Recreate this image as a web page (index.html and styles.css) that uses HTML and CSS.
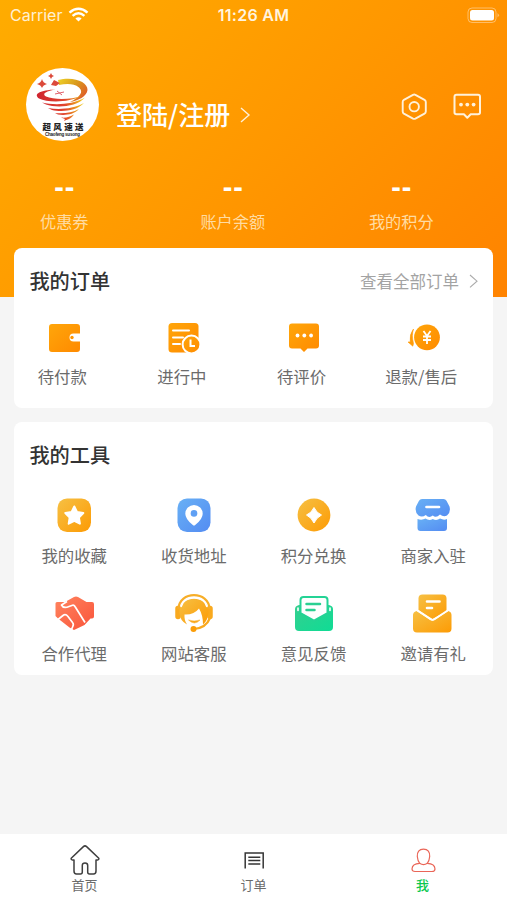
FILE: index.html
```html
<!DOCTYPE html>
<html lang="zh-CN">
<head>
<meta charset="utf-8">
<title>我的</title>
<link rel="stylesheet" href="styles.css">
</head>
<body>
<svg class="defs" width="0" height="0" aria-hidden="true">
  <defs>
    <linearGradient id="orange" x1="0" y1="0" x2="1" y2="1"><stop offset="0" stop-color="#ffa60a"/><stop offset="1" stop-color="#ff8a00"/></linearGradient>
    <linearGradient id="gold" x1="0" y1="0" x2="1" y2="1"><stop offset="0" stop-color="#f6c044"/><stop offset="1" stop-color="#fd9b04"/></linearGradient>
    <linearGradient id="blue" x1="0" y1="0" x2="1" y2="1"><stop offset="0" stop-color="#68b0f5"/><stop offset="1" stop-color="#548cf2"/></linearGradient>
    <linearGradient id="coral" x1="0" y1="0" x2="1" y2="1"><stop offset="0" stop-color="#ff855f"/><stop offset="1" stop-color="#f9533a"/></linearGradient>
    <linearGradient id="green" x1="0" y1="0" x2="1" y2="1"><stop offset="0" stop-color="#35cf8f"/><stop offset="1" stop-color="#0fdc95"/></linearGradient>
    <linearGradient id="swirl" gradientUnits="userSpaceOnUse" x1="11" y1="0" x2="61" y2="0"><stop offset="0" stop-color="#cf2430"/><stop offset=".55" stop-color="#e0432d"/><stop offset=".82" stop-color="#eda51c"/><stop offset="1" stop-color="#f3e51c"/></linearGradient>
    <linearGradient id="band" gradientUnits="userSpaceOnUse" x1="30" y1="12" x2="58" y2="34"><stop offset="0" stop-color="#f0d629"/><stop offset=".5" stop-color="#d99a1c"/><stop offset="1" stop-color="#e0532a"/></linearGradient>
  </defs>
</svg>
<div class="screen">
  <header class="header">
    <div class="status">
      <div class="carrier"><span>Carrier</span>
        <svg width="21" height="16" viewBox="0 0 21 16" fill="#fff"><path d="M10.500 14.500 7.400 11.400Q10.500 8.900 13.600 11.400Z"/><g fill="none" stroke="#fff" stroke-width="2.500"><path d="M4.600 8.900Q10.500 3.700 16.400 8.900"/><path d="M1.500 5.600Q10.500-2 19.500 5.600"/></g></svg>
      </div>
      <div class="time">11:26 AM</div>
      <div class="power"><svg width="33" height="17" viewBox="0 0 33 17"><rect x="1" y="1" width="28" height="14.500" rx="4" fill="none" stroke="#fff" stroke-opacity=".4"/><rect x="3" y="3" width="24" height="10.500" rx="2.500" fill="#fff"/><path d="M30.500 6v4.500q3-2.200 0-4.500Z" fill="#fff" fill-opacity=".4"/></svg></div>
    </div>
    <div class="profile">
      <div class="avatar">
        <svg width="73" height="73" viewBox="0 0 73 73">
          <path d="M32 12C48 8 62 14 61.500 22C61 28 52 33 44 34C54 29 58 24 53 19.500C48 15.500 41 15.500 33 17Z" fill="url(#band)"/>
          <path d="M30 21.500C14 22 7 26 13 30.500C22 35 44 34.500 55 28C46 31.500 28 32 20 28.500C15 25.500 21 23 30 21.500Z" fill="url(#swirl)"/>
          <path d="M16 34.500C28 37.500 46 37 59 29.500C50 39.500 30 40 20 36.500ZM22 40C33 42 47 41 58 35C50 43.500 35 44 26 42ZM29 45C37 46 46 45 53 41C48 47 38 47.500 32 46.500ZM35 49.500C40 50 44 49 48 46.500C45 51 41 51.500 38 53L39 51Z" fill="url(#swirl)"/>
          <path d="M29 26 38 24M31 23 36 27" fill="none" stroke="#e0606a" stroke-width="1"/>
          <path d="M16 11q1 4 5 5q-4 1-5 4q-1-3-5-4q4-1 5-5ZM25 5q.6 2.500 3 3q-2.400.5-3 3q-.6-2.500-3-3q2.400-.5 3-3ZM28 12l6 3-4 3-5-1Z" fill="#dc4a3a"/>
          <text class="brand" x="37" y="62" text-anchor="middle" textLength="41">超风速送</text>
          <text class="brand-latin" x="36.500" y="67.500" text-anchor="middle" textLength="35">Chaofeng susong</text>
        </svg>
      </div>
      <div class="login">登陆/注册</div>
      <svg class="login-arrow" width="12" height="18" viewBox="0 0 12 18" fill="none" stroke="#fff" stroke-opacity=".85" stroke-width="1.400"><path d="M2 2 10 9 2 16"/></svg>
      <div class="actions">
        <svg width="28" height="30" viewBox="0 0 28 30" fill="none" stroke="#fff1da" stroke-width="1.900" stroke-linejoin="round"><path d="M13 2.800Q14.200 2.200 15.400 2.800L24.500 7.800Q25.800 8.500 25.800 10V19.500Q25.800 20.900 24.500 21.600L15.400 26.600Q14.200 27.200 13 26.600L3.900 21.600Q2.700 20.900 2.700 19.500V10Q2.700 8.500 3.900 7.800Z"/><circle cx="14.200" cy="14.700" r="4.700"/></svg>
        <svg width="30" height="30" viewBox="0 0 30 30" fill="none" stroke="#fff1da" stroke-width="2" stroke-linejoin="round"><path d="M4.500 2.800H26Q28 2.800 28 4.800V20.500Q28 22.300 26 22.300H18.700L15.300 25.700 11.900 22.300H4.500Q2.500 22.300 2.500 20.500V4.800Q2.500 2.800 4.500 2.800Z"/><g fill="#fff1da" stroke="none"><circle cx="9" cy="12.600" r="1.900"/><circle cx="15.300" cy="12.600" r="1.900"/><circle cx="21.600" cy="12.600" r="1.900"/></g></svg>
      </div>
    </div>
    <div class="stats">
      <div class="stat"><b>--</b><span>优惠券</span></div>
      <div class="stat"><b>--</b><span>账户余额</span></div>
      <div class="stat"><b>--</b><span>我的积分</span></div>
    </div>
  </header>

  <main class="content">
    <section class="card orders">
      <div class="card-head">
        <h2>我的订单</h2>
        <div class="more">查看全部订单<svg width="10" height="16" viewBox="0 0 10 16" fill="none" stroke="#aaa" stroke-width="1.100"><path d="M1 2 8 8.200 1 14.400"/></svg></div>
      </div>
      <div class="grid">
        <div class="item">
          <svg class="icon" viewBox="0 0 44 44"><path d="M9 8H34Q37 8 37 11V17.500H30.500A4 4 0 0 0 30.500 25.500H37V33Q37 36 34 36H9Q6 36 6 33V11Q6 8 9 8Z" fill="url(#orange)"/><circle cx="29" cy="21.500" r="1.700" fill="#ff9500"/></svg>
          <span>待付款</span>
        </div>
        <div class="item">
          <svg class="icon" viewBox="0 0 44 44"><rect x="6.500" y="7" width="30" height="29.500" rx="3.500" fill="url(#orange)"/><path d="M11 14.500H27M11 21.500H21M11 28H18" stroke="#fff" stroke-width="2" stroke-linecap="round"/><circle cx="29.500" cy="28.500" r="8.900" fill="url(#orange)" stroke="#fff" stroke-width="2"/><path d="M28.500 23.500V30H33" fill="none" stroke="#fff" stroke-width="2"/></svg>
          <span>进行中</span>
        </div>
        <div class="item">
          <svg class="icon" viewBox="0 0 44 44"><path d="M10 7.500H34Q37 7.500 37 10.500V29.500Q37 32.500 34 32.500H25.500L22 36 18.500 32.500H10Q7 32.500 7 29.500V10.500Q7 7.500 10 7.500Z" fill="url(#orange)"/><g fill="#fff"><circle cx="15.500" cy="19.500" r="1.900"/><circle cx="22.300" cy="19.500" r="1.900"/><circle cx="29.100" cy="19.500" r="1.900"/></g></svg>
          <span>待评价</span>
        </div>
        <div class="item">
          <svg class="icon" viewBox="0 0 44 44"><circle cx="25" cy="21.300" r="12.900" fill="url(#orange)"/><path d="M21.500 15 25 20 28.500 15M25 20V28M21 20.500H29M21 24H29" fill="none" stroke="#fff" stroke-width="1.800"/><path d="M11.500 13Q7.200 18.500 8.200 26H6L10.800 30.200 11.500 27.500Q9.300 19 11.500 13Z" fill="#ff9c08" stroke="#ff9c08" stroke-width=".6"/></svg>
          <span>退款/售后</span>
        </div>
      </div>
    </section>

    <section class="card tools">
      <div class="card-head"><h2>我的工具</h2></div>
      <div class="grid">
        <div class="item">
          <svg class="icon" viewBox="0 0 44 44"><rect x="5.500" y="5.500" width="33.500" height="33.500" rx="9.500" fill="url(#gold)"/><path d="M22.300 13.500 25 19 31.300 20 26.900 24.500 27.900 30.700 22.300 27.900 16.700 30.700 17.700 24.500 13.300 20 19.600 19Z" fill="#fff" stroke="#fff" stroke-width="2" stroke-linejoin="round"/></svg>
          <span>我的收藏</span>
        </div>
        <div class="item">
          <svg class="icon" viewBox="0 0 44 44"><rect x="5.500" y="5.500" width="33" height="33.500" rx="9.500" fill="url(#blue)"/><path d="M22 12A8.700 8.700 0 0 1 30.700 20.700Q30.700 26 23.200 32Q22 33 20.800 32Q13.300 26 13.300 20.700A8.700 8.700 0 0 1 22 12Z" fill="#fff"/><circle cx="22" cy="20.400" r="3.300" fill="#5fa0f4"/></svg>
          <span>收货地址</span>
        </div>
        <div class="item">
          <svg class="icon" viewBox="0 0 44 44"><circle cx="22" cy="22" r="16.400" fill="url(#gold)"/><path d="M22 14.500Q24.500 20 29.500 22Q24.500 24.500 22 30Q19.500 24.500 14.500 22Q19.500 20 22 14.500Z" fill="#fff" stroke="#fff" stroke-linejoin="round"/></svg>
          <span>积分兑换</span>
        </div>
        <div class="item">
          <svg class="icon" viewBox="0 0 44 44"><path d="M11 6H32.500Q34.500 6 35.500 7.800L38.500 13.500Q40 19.500 36 22.500Q32.500 24.500 29 21.500Q25 25.500 21.800 22.500Q18 25.500 14.800 22Q11 24.800 7.500 22.500Q3.500 19 5 13.500L8 7.800Q9 6 11 6Z" fill="url(#blue)"/><path d="M6.500 26Q11 27.500 14.500 25.500Q18 28 21.800 26Q25.500 28 29 25.500Q33 27.500 36 26V35Q36 38 33 38H9.500Q6.500 38 6.500 35Z" fill="url(#blue)"/><path d="M15.500 14H28" stroke="#fff" stroke-width="2.700" stroke-linecap="round"/></svg>
          <span>商家入驻</span>
        </div>
        <div class="item">
          <svg class="icon" viewBox="0 0 44 44"><path d="M3.500 12.500Q3.500 11 5 11H13L22 6Q24 5 26 6L34.500 11H40Q42 11 42 13V25.500Q42 27.500 40 27.500H38.500L32.500 34 22 39 17.500 36.500 6 27.500 3.500 25Z" fill="url(#coral)"/><path d="M15 10.500 9.500 14Q11.500 18 17 15.500L20.500 14.200Q22 13.700 23 15.500L33 31.500" fill="none" stroke="#fff" stroke-width="1.700" stroke-linejoin="round"/><path d="M6 28.500 11 24.500Q13.500 22.500 16 25.500L20.500 31.500Q22 33 20.800 35.500L19 39.500" fill="none" stroke="#fff" stroke-width="1.700"/></svg>
          <span>合作代理</span>
        </div>
        <div class="item">
          <svg class="icon" viewBox="0 0 44 44"><path d="M6 17.500V25.500M38 17.500V25.500" stroke="#f9a91e" stroke-width="5.500" stroke-linecap="round"/><path d="M6.500 18C7-.5 37-.5 37.500 18" fill="none" stroke="#f7ae28" stroke-width="2.200"/><path d="M7.500 22C6 3 38 3 36.500 22Q35.500 30 31 33.500Q31 24 27 17.500Q22 24 12.500 23.500Q12 29 15 33.500Q8 30 7.500 22Z" fill="url(#gold)"/><path d="M9 16C12 3.500 32 3.500 35 16" fill="none" stroke="#fff" stroke-width="1.400"/><path d="M38 27Q34 37 22 38" fill="none" stroke="#f9a91e" stroke-width="2.200"/><path d="M16.500 29Q22.500 35 28 29Q22 31 16.500 29Z" fill="#f9a91e" stroke="#f9a91e" stroke-width=".5"/><circle cx="21.500" cy="38" r="3" fill="#fb9d08"/></svg>
          <span>网站客服</span>
        </div>
        <div class="item">
          <svg class="icon" viewBox="0 0 44 44"><path d="M7 14H37Q41 15 41 18V36Q41 40 37 40H7Q3 40 3 36V18Q3 15 7 14Z" fill="url(#green)"/><path d="M6 19.500V17M38 19.500V17" stroke="#fff" stroke-width="1.600" stroke-linecap="round"/><path d="M8.500 22V9Q8.500 6 11.500 6H32.500Q35.500 6 35.500 9V22L22 29.500Z" fill="#fff" stroke="#24d395" stroke-width="2"/><path d="M14.500 13H28M14.500 19H22.500" stroke="#2bd092" stroke-width="2.500" stroke-linecap="round"/></svg>
          <span>意见反馈</span>
        </div>
        <div class="item">
          <svg class="icon" viewBox="0 0 44 44"><path d="M11.500 3.500H31.500Q35.500 3.500 35.500 7.500V20L21.500 28 7.500 19V7.500Q7.500 3.500 11.500 3.500Z" fill="url(#gold)"/><path d="M5.500 20 20 29.300Q21.500 30 23 29.300L37.500 20Q40.500 21 40.500 24V37.500Q40.500 41.500 36.500 41.500H6Q2 41.500 2 37.500V24Q2 21 5.500 20Z" fill="url(#gold)"/><path d="M5 18.500 19.500 28.200Q21.500 29.500 23.500 28.200L38 18.500" fill="none" stroke="#fff" stroke-width="1.800"/><path d="M16 10.500H28.500M16 17H21" stroke="#fff" stroke-width="2.600" stroke-linecap="round"/></svg>
          <span>邀请有礼</span>
        </div>
      </div>
    </section>
  </main>

  <nav class="tabs">
    <div class="tab">
      <svg viewBox="0 0 32 32" fill="none" stroke="#3f3f3f" stroke-width="1.500" stroke-linejoin="round"><path d="M14.400 2.600Q16 1.200 17.600 2.600L29.800 14.200Q30.200 15.800 28.600 16H27V27Q27 30 24.500 30H20.500Q18.700 30 18.700 28V21.500Q18.700 19 16 19T13.300 21.500V28Q13.300 30 11.500 30H7.500Q5 30 5 27V16H3.400Q1.800 15.800 2.200 14.200Z"/></svg>
      <span>首页</span>
    </div>
    <div class="tab">
      <svg viewBox="0 0 32 32" fill="none" stroke="#353535" stroke-width="1.500"><path d="M7.200 24.500V9H25.200V24.500M10.300 13.300H22.300M10.300 16.600H22.300M10.300 20H22.300"/></svg>
      <span>订单</span>
    </div>
    <div class="tab active">
      <svg viewBox="0 0 32 32" fill="none" stroke="#ea6658" stroke-width="1.200"><path d="M16.500 5.200C21 5.200 22.900 8 22.700 12.500Q22.300 17 20.300 19.300Q27.800 19.500 28 25Q28 27.500 25 27.500H8Q5 27.500 5 25Q5.200 19.500 12.700 19.300Q10.700 17 10.300 12.500C10.100 8 12 5.200 16.500 5.200ZM12.700 19.300Q16.500 22 20.300 19.300"/></svg>
      <span>我</span>
    </div>
  </nav>
</div>
</body>
</html>
```
FILE: styles.css
```css
* { box-sizing: border-box; }
body {
  margin: 0;
  background: #f5f5f5;
  color: #6b6b6b;
  font-family: "Noto Sans CJK SC", sans-serif;
}
svg { display: block; flex: none; }
.defs { position: absolute; }
.screen {
  height: 900px;
  display: flex;
  flex-direction: column;
  overflow: hidden;
}
.header {
  height: 297px;
  flex: none;
  color: #fff;
  background: linear-gradient(135deg, #ffac00 0%, #ff9800 50%, #ff8300 100%);
}
.status {
  height: 30px;
  padding: 0 7px 0 10px;
  display: grid;
  grid-template-columns: 1fr auto 1fr;
  align-items: center;
  font: 16px/30px Inter, sans-serif;
}
.carrier { display: flex; align-items: center; gap: 6px; color: #fff0d2; }
.time { margin-left: -3px; font-weight: 600; letter-spacing: .3px; color: #fff4df; }
.power { justify-self: end; }
.profile {
  height: 111px;
  padding: 38px 26px 0;
  display: flex;
  align-items: flex-start;
}
.avatar {
  width: 73px;
  height: 73px;
  border-radius: 50%;
  background: #fff;
  overflow: hidden;
}
.brand { font-size: 8.5px; font-weight: 900; fill: #222; }
.brand-latin { font: bold 4.5px "Liberation Sans", sans-serif; fill: #222; }
.login {
  margin: 27px 0 0 17px;
  font-size: 26px;
  font-weight: 500;
  line-height: 38px;
}
.login-arrow { margin: 38px 0 0 9px; }
.actions { display: flex; gap: 24px; margin: 24px -1px 0 auto; }
.stats {
  display: grid;
  grid-template-columns: repeat(3, 168.5px);
  margin-left: -20px;
  padding-top: 30px;
}
.stat { display: flex; flex-direction: column; align-items: center; }
.stat b { font: bold 28px/30px "Open Sans", sans-serif; letter-spacing: 1.6px; margin-right: -1.6px; }
.stat span { margin-top: 8px; font-size: 16.2px; line-height: 24px; color: #ffdca3; }
.content { flex: 1; padding: 0 14px 0 14.4px; margin-top: -49px; }
.card { background: #fff; border-radius: 8px; }
.orders { height: 160.4px; margin-bottom: 14px; }
.tools { height: 253px; }
.card-head {
  height: 65px;
  padding: 0 14px 0 15px;
  display: flex;
  align-items: center;
  justify-content: space-between;
}
h2 { margin: 0; font-size: 20.2px; line-height: 30px; font-weight: 500; color: #333; }
.more { display: flex; align-items: center; gap: 10px; font-size: 16.5px; line-height: 24px; color: #a3a3a3; }
.grid { display: grid; grid-template-columns: repeat(4, 1fr); }
.item {
  height: 98px;
  display: flex;
  flex-direction: column;
  align-items: center;
  font-size: 16.4px;
  line-height: 24px;
}
.icon { width: 44px; height: 44px; }
.orders .icon { margin: 3px 0 4px 5px; }
.orders .item { padding-right: 24px; }
.tools .grid { padding-top: 5.6px; }
.tools .icon { margin-bottom: 6.4px; }
.tabs {
  height: 66px;
  flex: none;
  display: grid;
  grid-template-columns: repeat(3, 1fr);
  background: #fff;
}
.tab {
  display: flex;
  flex-direction: column;
  align-items: center;
  padding-top: 10px;
  font-size: 13px;
  line-height: 18px;
}
.tab svg { width: 32px; height: 32px; }
.active span { color: #0bc84f; font-weight: 500; }
```
